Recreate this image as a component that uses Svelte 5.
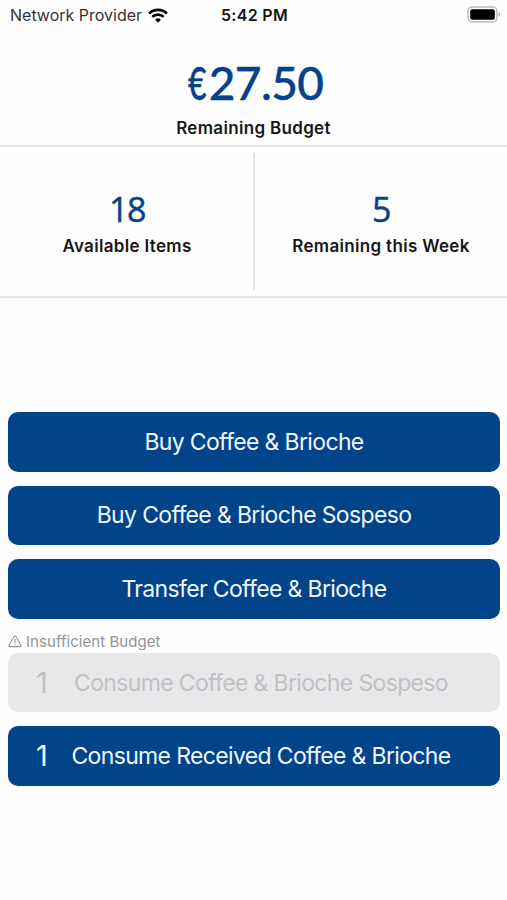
<script lang="ts">
interface Action {
  label: string;
  count?: number;
  warning?: string;
}

const currency = "€";
const budget = "27.50";

const stats = [
  { value: 18, label: "Available Items" },
  { value: 5, label: "Remaining this Week" },
];

const actions: Action[] = [
  { label: "Buy Coffee & Brioche" },
  { label: "Buy Coffee & Brioche Sospeso" },
  { label: "Transfer Coffee & Brioche" },
  { label: "Consume Coffee & Brioche Sospeso", count: 1, warning: "Insufficient Budget" },
  { label: "Consume Received Coffee & Brioche", count: 1 },
];
</script>

<div class="screen">
  <header class="status-bar">
    <div class="carrier">
      <span>Network Provider</span>
      <svg class="wifi" viewBox="0 0 20 15" fill="none" stroke="#050505" stroke-width="2.7">
        <path d="M1.1 5.6a12.6 12.6 0 0 1 17.8 0"/>
        <path d="M4.3 8.9a8.1 8.1 0 0 1 11.4 0"/>
        <path d="M10 14.7l-2.9-2.9a4.1 4.1 0 0 1 5.8 0z" fill="#050505" stroke="none"/>
      </svg>
    </div>
    <span class="time">5:42 PM</span>
    <svg class="battery" viewBox="0 0 34 18">
      <rect x="1" y="1" width="29" height="15" rx="4.2" fill="#fff" stroke="#bdbdbd" stroke-width="1.5"/>
      <rect x="3.2" y="3.2" width="24.6" height="10.6" rx="2" fill="#000"/>
      <path d="M31.6 6.2q1.7.6 1.7 2.3t-1.7 2.3z" fill="#b5b5b5"/>
    </svg>
  </header>

  <section class="budget">
    <div class="amount"><span class="currency">{currency}</span>{budget}</div>
    <div class="caption">Remaining Budget</div>
  </section>

  <section class="stats">
    {#each stats as stat}
      <div class="stat">
        <div class="value">{stat.value}</div>
        <div class="caption">{stat.label}</div>
      </div>
    {/each}
  </section>

  <main class="actions">
    {#each actions as action}
      <div class="action">
        {#if action.warning}
          <div class="warning">
            <svg viewBox="0 0 14 13" fill="none" stroke="currentColor" stroke-width="1.1" stroke-linejoin="round" stroke-linecap="round">
              <path d="M6.1 1.4q.9-1.3 1.8 0l5 8.7q.5 1.3-.9 1.5H2q-1.4-.2-.9-1.5z"/>
              <path d="M7 4.2v3.5M7 9.6v.1"/>
            </svg>
            <span>{action.warning}</span>
          </div>
        {/if}
        <button class:counted={action.count} disabled={!!action.warning}>
          {#if action.count}
            <span class="count">{action.count}</span>
          {/if}
          <span class="label">{action.label}</span>
        </button>
      </div>
    {/each}
  </main>
</div>

<style>
  :global(body) {
    background: #fff;
  }

  .screen {
    width: 507px;
    height: 900px;
    overflow: hidden;
    background: #fefefe;
    color: #161616;
    font-family: Inter, "Liberation Sans", sans-serif;
  }

  .status-bar {
    display: grid;
    grid-template-columns: 1fr auto 1fr;
    align-items: center;
    height: 30px;
    padding: 0 8px 0 10px;
    font-size: 16px;
  }

  .carrier {
    display: flex;
    align-items: center;
    gap: 6px;
    color: #333;
    white-space: nowrap;
  }

  .wifi {
    width: 20px;
    height: 15px;
  }

  .time {
    font-weight: 600;
    letter-spacing: 0.3px;
  }

  .battery {
    width: 34px;
    height: 18px;
    margin-right: -2px;
    justify-self: end;
  }

  .budget {
    box-sizing: border-box;
    height: 117px;
    padding-top: 28px;
    border-bottom: 2px solid #e6e6e7;
    text-align: center;
  }

  .amount {
    color: #05428b;
    font: 500 46px/50px Lato, sans-serif;
    letter-spacing: -0.6px;
    -webkit-text-stroke: 0.4px #05428b;
  }

  .currency {
    display: inline-block;
    margin-right: -1px;
    transform: scaleX(0.7);
  }

  .caption {
    font-size: 17px;
    font-weight: 600;
    line-height: 22px;
    letter-spacing: 0.32px;
  }

  .budget .caption {
    margin-top: 9px;
  }

  .stats {
    display: grid;
    grid-template-columns: 255px 1fr;
    box-sizing: border-box;
    height: 151px;
    padding: 6px 0;
    border-bottom: 2px solid #e6e6e7;
  }

  .stat {
    padding-top: 35px;
    text-align: center;
  }

  .stat:first-child {
    padding-left: 1px;
    border-right: 2px solid #e6e6e7;
  }

  .value {
    color: #05428b;
    font: 500 34px/42px "Open Sans", sans-serif;
    letter-spacing: -1.5px;
    -webkit-text-stroke: 0.5px #05428b;
  }

  .stat .caption {
    margin-top: 5px;
  }

  .actions {
    display: flex;
    flex-direction: column;
    gap: 14px;
    padding: 114px 7px 0 8px;
  }

  button {
    display: flex;
    align-items: center;
    justify-content: center;
    width: 100%;
    height: 59.6px;
    padding: 0;
    border: 0;
    border-radius: 10px;
    background: #014489;
    color: #f1f6ff;
    font: 400 23px/30px Inter, "Liberation Sans", sans-serif;
    letter-spacing: -0.65px;
    white-space: nowrap;
  }

  button.counted {
    justify-content: flex-start;
  }

  button:disabled {
    background: #e8e8ea;
    color: #c1c1c4;
  }

  .count {
    box-sizing: border-box;
    flex: none;
    width: 63px;
    padding-left: 4px;
    font-size: 29px;
    text-align: center;
  }

  .counted .label {
    flex: 1;
    padding-right: 49px;
    text-align: center;
  }

  .warning {
    display: flex;
    align-items: center;
    gap: 4px;
    height: 18px;
    padding-bottom: 2px;
    color: #949496;
    font-size: 15px;
    letter-spacing: 0.05px;
  }

  .warning svg {
    width: 14px;
    height: 13px;
  }
</style>
